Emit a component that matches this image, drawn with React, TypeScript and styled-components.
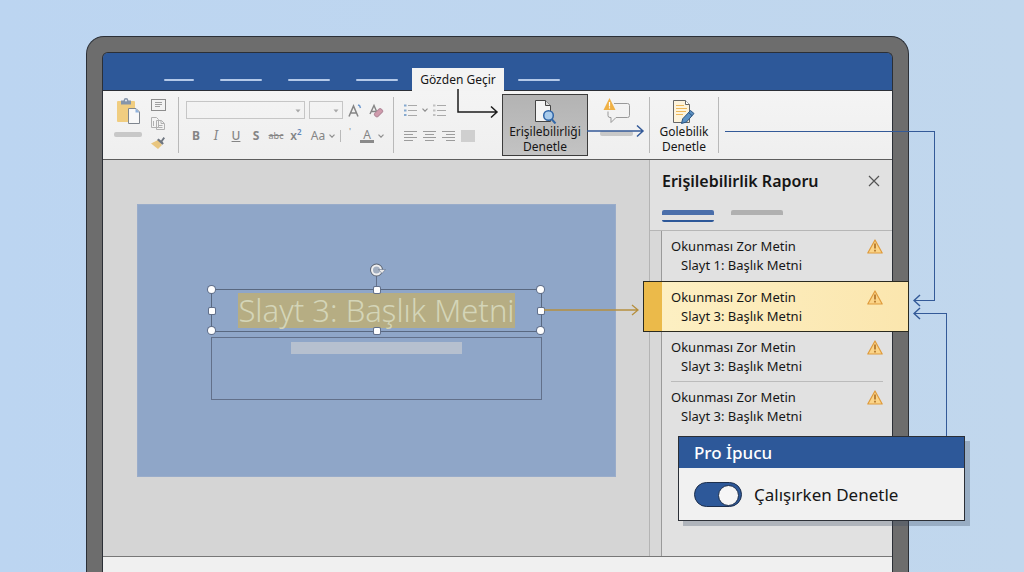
import React from "react";
import styled, { createGlobalStyle, css } from "styled-components";

const ink = "#2b2f36";
const blue = "#2d5899";
const line = "#345a98";
const muted = "#858585";

const GlobalStyle = createGlobalStyle`
  * { box-sizing: border-box; }
  body {
    margin: 0;
    background: #bfd7ef;
    font-family: "Noto Sans", "Open Sans", sans-serif;
    color: #161616;
  }
  button {
    font: inherit;
    color: inherit;
    background: none;
    border: 0;
    padding: 0;
  }
  svg { display: block; }
`;

const Stage = styled.main`
  display: flex;
  min-height: 100vh;
  padding: 36px 115px 0 86px;
  background: linear-gradient(90deg, #bcd5f1, #c1d7ed);
  overflow: hidden;
`;

const Laptop = styled.div`
  position: relative;
  flex: 1;
  display: flex;
  min-width: 0;
  padding: 15px 15px 0;
  background: #6d6d6d;
  border: 1px solid ${ink};
  border-bottom: 0;
  border-radius: 18px 18px 0 0;
`;

const Screen = styled.div`
  flex: 1;
  min-width: 0;
  display: flex;
  flex-direction: column;
  border: 1px solid ${ink};
  border-bottom: 0;
  border-radius: 6px 6px 0 0;
`;

const TabBar = styled.nav`
  display: flex;
  height: 38px;
  padding-left: 61px;
  gap: 26px;
  background: ${blue};
  border-bottom: 1px solid ${ink};
  border-radius: 5px 5px 0 0;
`;

const TabStub = styled.span<{ $w: number }>`
  flex: none;
  width: ${(p) => p.$w}px;
  height: 2px;
  margin-top: 26px;
  border-radius: 1px;
  background: #b4c9e8;
`;

const ActiveTab = styled.button`
  position: relative;
  flex: none;
  width: 92px;
  height: 23px;
  margin: 15px -12px 0;
  background: #f3f3f3;
  font-size: 12px;
  line-height: 22px;
`;

const Ribbon = styled.div`
  display: flex;
  align-items: center;
  height: 69px;
  background: linear-gradient(#f4f4f4, #efefef);
  border-bottom: 1px solid #5d5d5d;
`;

const Divider = styled.span<{ $h?: number }>`
  flex: none;
  width: 1px;
  height: ${(p) => p.$h ?? 56}px;
  background: #b9b9b9;
`;

const Group = styled.div<{ $w: number; $pad: number }>`
  flex: none;
  display: flex;
  width: ${(p) => p.$w}px;
  height: 56px;
  padding-left: ${(p) => p.$pad}px;
`;

const Stack = styled.div<{ $gap: number; $align?: string }>`
  display: flex;
  flex-direction: column;
  align-items: ${(p) => p.$align ?? "center"};
  gap: ${(p) => p.$gap}px;
`;

const Line = styled.div<{ $gap?: number; $h: number }>`
  display: flex;
  align-items: center;
  gap: ${(p) => p.$gap ?? 0}px;
  height: ${(p) => p.$h}px;
`;

const LabelStub = styled.span<{ $w: number }>`
  width: ${(p) => p.$w}px;
  height: 5px;
  border-radius: 2px;
  background: #c8c8c8;
`;

const PasteColumn = styled(Stack)`
  margin-right: 8px;
`;

const SmallTools = styled(Stack)`
  padding-top: 2px;
`;

const PickerBox = styled.div<{ $w: number }>`
  position: relative;
  width: ${(p) => p.$w}px;
  height: 18px;
  & > svg {
    position: absolute;
    right: 4px;
    top: 8px;
    pointer-events: none;
  }
`;

const Picker = styled.select`
  display: block;
  width: 100%;
  height: 100%;
  appearance: none;
  background: transparent;
  border: 1px solid #c6c6c6;
  border-radius: 0;
`;

const Format = styled.button<{ $w?: number; $kind?: string }>`
  display: flex;
  align-items: center;
  justify-content: center;
  gap: 4px;
  flex: none;
  width: ${(p) => p.$w ?? 20}px;
  height: 20px;
  color: ${muted};
  font-size: 12px;
  line-height: 16px;
  ${(p) => p.$kind === "bold" && css`font-weight: 700;`}
  ${(p) => p.$kind === "semibold" && css`font-weight: 600;`}
  ${(p) => p.$kind === "italic" && css`font-family: "DejaVu Serif", serif; font-style: italic;`}
  ${(p) => p.$kind === "underline" && css`font-weight: 500; text-decoration: underline;`}
  ${(p) => p.$kind === "strike" && css`font-size: 9px; text-decoration: line-through;`}
  ${(p) => p.$kind === "tick" && css`align-items: flex-start; font-size: 9px; line-height: 12px;`}
`;

const PowerMark = styled.span`
  align-self: flex-start;
  margin-left: -4px;
  color: #5f86b8;
  font-size: 8px;
  line-height: 12px;
`;

const FontMark = styled.span`
  width: 14px;
  font-size: 12px;
  line-height: 11px;
  text-align: center;
  border-bottom: 3px solid #8a8a8a;
`;

const Command = styled.button<{ $w: number; $active?: boolean }>`
  position: relative;
  flex: none;
  display: flex;
  flex-direction: column;
  align-items: center;
  width: ${(p) => p.$w}px;
  height: 62px;
  padding-top: 3px;
  font-size: 12px;
  line-height: 15px;
  white-space: nowrap;
  border: 1px solid transparent;
  ${(p) =>
    p.$active &&
    css`
      background: linear-gradient(#b3b3b3, #c3c3c3);
      border-color: #3c3c3c;
    `}
`;

const CommandLine = styled.span`
  display: block;
  height: 15px;
`;

const CommentCommand = styled(Command)`
  padding-right: 4px;
`;

const Content = styled.div`
  flex: 1;
  display: flex;
  min-height: 396px;
`;

const Canvas = styled.section`
  flex: 1;
  min-width: 0;
  display: flex;
  padding: 44px 33px 79px 34px;
  background: #d5d5d5;
`;

const Slide = styled.div`
  flex: 1;
  min-width: 0;
  padding: 84px 73px 0;
  background: #8fa6c8;
  border: 1px solid #99acca;
`;

const TitleFrame = styled.div`
  position: relative;
  display: flex;
  justify-content: center;
  align-items: center;
  height: 43px;
  border: 1px solid #596880;
`;

const TitleText = styled.h1`
  margin: 0;
  background: #b6ad83;
  color: #d4d5b8;
  font-size: 31px;
  font-weight: 300;
  line-height: 35px;
  white-space: nowrap;
`;

const Handle = styled.span<{ $x: string; $y: string; $round?: boolean }>`
  position: absolute;
  left: ${(p) => p.$x};
  top: ${(p) => p.$y};
  width: ${(p) => (p.$round ? 7 : 6)}px;
  height: ${(p) => (p.$round ? 7 : 6)}px;
  margin: ${(p) => (p.$round ? -4 : -3)}px;
  border-radius: ${(p) => (p.$round ? "50%" : "1px")};
  background: #fff;
  box-shadow: 0 0 0 1px #62708a;
`;

const RotateHandle = styled.div`
  position: absolute;
  left: 50%;
  top: -28px;
  margin-left: -8px;
`;

const BodyFrame = styled.div`
  display: flex;
  justify-content: center;
  height: 63px;
  margin-top: 5px;
  padding-top: 4px;
  border: 1px solid #62708a;
`;

const BodyStub = styled.span`
  width: 52%;
  height: 12px;
  background: #b6c0cf;
`;

const Pane = styled.aside`
  flex: none;
  display: flex;
  flex-direction: column;
  width: 243px;
  background: #e1e1e1;
  border-left: 1px solid #b4b4b4;
`;

const PaneHead = styled.header`
  display: flex;
  align-items: center;
  justify-content: space-between;
  height: 41px;
  padding: 0 12px;
`;

const PaneTitle = styled.h2`
  margin: 0;
  font-size: 16px;
  font-weight: 600;
  line-height: 22px;
  white-space: nowrap;
`;

const PaneTabs = styled.div`
  display: flex;
  gap: 17px;
  height: 30px;
  padding: 9px 12px 0;
  border-bottom: 1px solid #b6b6b6;
`;

const PaneTab = styled.button<{ $on?: boolean }>`
  width: 52px;
  height: 12px;
  border-top: 5px solid ${(p) => (p.$on ? "#4a6eaa" : "#b0b0b0")};
  border-bottom: 2px solid ${(p) => (p.$on ? blue : "transparent")};
  border-radius: 2px;
`;

const IssueArea = styled.div`
  flex: 1;
  display: flex;
  padding-left: 11px;
  background: #d8d8d8;
`;

const Issues = styled.ul`
  flex: 1;
  min-width: 0;
  margin: 0;
  padding: 0;
  list-style: none;
  background: #e1e1e1;
  border-left: 1px solid #9a9a9a;
`;

const Issue = styled.li<{ $selected?: boolean; $ruled?: boolean }>`
  position: relative;
  display: flex;
  justify-content: space-between;
  height: ${(p) => (p.$selected ? 51 : 50)}px;
  margin: 0 9px;
  padding-top: 6px;
  font-size: 13px;
  line-height: 19px;
  white-space: nowrap;
  ${(p) => p.$ruled && css`border-bottom: 1px solid #bbb;`}
  ${(p) =>
    p.$selected &&
    css`
      margin: 0 -17px 0 -19px;
      padding: 6px 25px 0 27px;
      background: linear-gradient(90deg, #fdf0c4, #fbe6ae);
      border: 1px solid #2a2a20;
      &::before {
        content: "";
        position: absolute;
        inset: 0 auto 0 0;
        width: 18px;
        background: #ebba4a;
      }
    `}
`;

const IssuePlace = styled.div`
  padding-left: 10px;
`;

const WarnMark = styled.span`
  padding-top: 2px;
`;

const StatusBar = styled.footer`
  height: 17px;
  background: #f0f0f0;
  border-top: 1px solid #777;
`;

const Tip = styled.section`
  position: absolute;
  right: -57px;
  top: 399px;
  width: 287px;
  background: #f1f1f1;
  border: 1px solid ${ink};
  box-shadow: 5px 5px 0 rgba(60, 75, 100, 0.3);
`;

const TipTitle = styled.h2`
  margin: 0;
  padding: 0 15px;
  background: ${blue};
  color: #fff;
  font-size: 17px;
  font-weight: 500;
  line-height: 31px;
`;

const TipBody = styled.label`
  display: flex;
  align-items: center;
  gap: 12px;
  height: 52px;
  padding: 0 15px;
  font-size: 17px;
  white-space: nowrap;
`;

const Switch = styled.input`
  appearance: none;
  position: relative;
  flex: none;
  width: 48px;
  height: 25px;
  margin: 0;
  background: ${blue};
  border: 1px solid #1d2f4d;
  border-radius: 13px;
  &::after {
    content: "";
    position: absolute;
    right: 2px;
    top: 2px;
    width: 19px;
    height: 19px;
    border-radius: 50%;
    background: #f6f6f6;
    border: 1px solid #1d2f4d;
  }
`;

/* Elbow connector: two borders of an empty box that stretches with the page */
const Elbow = styled.span<{ $top: number; $height: number; $left: string; $right: number; $sides: string }>`
  position: absolute;
  top: ${(p) => p.$top}px;
  height: ${(p) => p.$height}px;
  left: ${(p) => p.$left};
  right: ${(p) => p.$right}px;
  border: 0 solid ${line};
  border-width: ${(p) => p.$sides};
  pointer-events: none;
`;

const Floating = styled.span<{ $left?: string; $right?: number; $top: number }>`
  position: absolute;
  top: ${(p) => p.$top}px;
  left: ${(p) => p.$left ?? "auto"};
  right: ${(p) => (p.$right === undefined ? "auto" : `${p.$right}px`)};
  z-index: 2;
  pointer-events: none;
`;

const Chevron = () => (
  <svg width="6" height="4" viewBox="0 0 6 4" fill="none" stroke="#8f8f8f" strokeWidth="1.2">
    <path d="M.5 .7 3 3.2 5.5 .7" />
  </svg>
);

const Caret = () => (
  <svg width="6" height="4" viewBox="0 0 6 4">
    <path d="M.5 .5h5L3 3.5z" fill="#a8a8a8" />
  </svg>
);

const Paste = () => (
  <svg width="26" height="27" viewBox="0 0 26 27">
    <rect x="2" y="4" width="18" height="21" rx="1" fill="#f0cd80" />
    <path d="M6 3.500h2.600a2.400 2.400 0 0 1 4.800 0H16v4H6z" fill="#8595aa" />
    <circle cx="11" cy="3.600" r="1" fill="#e8edf3" />
    <path d="M13.500 11.500h7.500l3.500 3.500v11.500h-11z" fill="#f8f8f8" stroke="#7e858e" />
    <path d="M20.500 11.500v4h4z" fill="#8fb2dd" />
  </svg>
);

const LayoutIcon = () => (
  <svg width="15" height="12" viewBox="0 0 15 12" fill="none" stroke="#8d8d8d">
    <rect x=".5" y=".5" width="14" height="11" />
    <path d="M4 3.500h7M4 5.500h7M4 7.500h5" stroke="#a0a0a0" />
  </svg>
);

const CopyIcon = () => (
  <svg width="14" height="13" viewBox="0 0 14 13" fill="#f3f3f3" stroke="#b0b0b0">
    <path d="M.5 .5h5l2 2v8h-7zM5.500 3.500h5l3 3v6h-8zM10 3.500v3h3M7.500 8.500h4M7.500 10.500h4M2.500 4v5" />
  </svg>
);

const Brush = () => (
  <svg width="16" height="13" viewBox="0 0 16 13">
    <path d="M1 7.500 8 4l4 5-4 4z" fill="#e9c67f" />
    <path d="M7 4l1.500-1.500L11 4.500 13.500 1 15 2.300 12.500 5.500l1.300 2-1.500 1.300z" fill="#6f7680" />
  </svg>
);

const GrowFont = () => (
  <svg width="14" height="15" viewBox="0 0 14 15" fill="none" stroke={muted} strokeWidth="1.500">
    <path d="M1 13.500 5.500 3 10 13.500M2.700 10h5.600" />
    <path d="M10 2l1.500 .5L12.500 5" stroke="#6d98cf" />
  </svg>
);

const ClearFormat = () => (
  <svg width="15" height="15" viewBox="0 0 15 15" fill="none">
    <path d="M1 11 5 2.500l3.500 8M2.500 8.500h5" stroke={muted} strokeWidth="1.400" />
    <rect x="5" y="7.500" width="9" height="4.500" rx="1.500" transform="rotate(-45 9.500 9.700)" fill="#d09bac" stroke="#b2899a" />
  </svg>
);

const Bullets = ({ dots }: { dots: string }) => (
  <svg width="13" height="12" viewBox="0 0 13 12">
    <path d="M0 1.500h2.500M0 6.500h2.500M0 11h2.500" stroke={dots} strokeWidth="2" />
    <path d="M4 1.500h9M4 6.500h9M4 11.500h9" stroke="#a9a9a9" />
  </svg>
);

const AlignIcon = ({ d }: { d: string }) => (
  <svg width="13" height="11" viewBox="0 0 13 11">
    <path d={d} stroke="#9c9c9c" />
  </svg>
);

const Justify = () => (
  <svg width="14" height="12" viewBox="0 0 14 12">
    <rect width="14" height="12" fill="#cfcfcf" />
  </svg>
);

const CheckDoc = () => (
  <svg width="24" height="26" viewBox="0 0 24 26">
    <path d="M2.500 2.500h10l5 5v16h-15z" fill="#f4f4f4" stroke="#444" />
    <path d="M12.500 2.500v5h5" fill="#d9d9d9" stroke="#444" />
    <path d="M18.500 21l4 4.500" stroke="#3469a8" strokeWidth="2" />
    <circle cx="15.500" cy="17.500" r="4.800" fill="#a9cbeb" stroke="#2f65a7" strokeWidth="1.500" />
  </svg>
);

const CommentWarn = () => (
  <svg width="28" height="26" viewBox="0 0 28 26">
    <path d="M11 5.500h13.500a2 2 0 0 1 2 2v10a2 2 0 0 1-2 2H13l-5 5v-5H7a2 2 0 0 1-2-2v-4" fill="none" stroke="#999" />
    <path d="M6.500 0l6 12h-12z" fill="#f0b145" />
    <path d="M6.500 4v4.500M6.500 9.300v1.300" stroke="#fff" strokeWidth="1.200" />
  </svg>
);

const EditDoc = () => (
  <svg width="24" height="26" viewBox="0 0 24 26">
    <path d="M1.500 2.500h12l4 4v18h-16z" fill="#fdf3dc" stroke="#666" />
    <path d="M13.500 2.500v4h4" fill="#fff" stroke="#666" />
    <path d="M4 7.500h8M4 10.500h11M4 13.500h10M4 16.500h7" stroke="#efb95a" strokeWidth="1.200" />
    <path d="M18.500 12.500l3.500 3-7.500 8.500-5 1.500 1.200-4.700z" fill="#5b91c4" stroke="#2c5580" />
    <path d="M16.700 14.600l3.400 3.100" stroke="#2c5580" />
  </svg>
);

const Warning = () => (
  <svg width="16" height="15" viewBox="0 0 16 15">
    <path d="M8 1 15.200 14H.8z" fill="#fbd488" stroke="#df9b3c" strokeWidth="1.200" strokeLinejoin="round" />
    <path d="M8 4.500v5M8 10.800v1.700" stroke="#a5651b" strokeWidth="1.500" />
  </svg>
);

const Close = () => (
  <svg width="12" height="12" viewBox="0 0 12 12" stroke="#555" strokeWidth="1.200">
    <path d="M1 1l10 10M11 1 1 11" />
  </svg>
);

const Rotate = () => (
  <svg width="18" height="28" viewBox="0 0 18 28" fill="none">
    <path d="M7.500 14v13" stroke="#62708a" />
    <circle cx="7.500" cy="8" r="4.500" stroke="#5d6675" strokeWidth="4" />
    <circle cx="7.500" cy="8" r="4.500" fill="#a3afc0" stroke="#f0f0f0" strokeWidth="2" />
    <path d="M9.500 7.500h7l-3.500 4z" fill="#e8e8e8" stroke="#62708a" strokeWidth=".6" />
  </svg>
);

const HeadLeft = () => (
  <svg width="22" height="13" viewBox="0 0 22 13" fill="none" stroke={line}>
    <path d="M7 1 1 6.500l6 5.500" strokeWidth="1.500" />
    <path d="M1 6.500h21" />
  </svg>
);

const TabArrow = () => (
  <svg width="42" height="32" viewBox="0 0 42 32" fill="none" stroke="#1d1d1d" strokeWidth="1.500">
    <path d="M1 1v23h39M34 18.500l6 5.500-6 5.500" />
  </svg>
);

const CommandArrow = () => (
  <svg width="58" height="14" viewBox="0 0 58 14" fill="none" stroke={line} strokeWidth="1.500">
    <path d="M0 7h56M50 1.500 56 7l-6 5.500" />
  </svg>
);

const IssueArrow = () => (
  <svg width="98" height="12" viewBox="0 0 98 12" fill="none" stroke="#b6903f" strokeWidth="1.300">
    <path d="M3 6h94M91 1l6 5-6 5" />
  </svg>
);

const handles: [string, string, boolean][] = [
  ["0%", "0%", true],
  ["50%", "0%", false],
  ["100%", "0%", true],
  ["0%", "50%", false],
  ["100%", "50%", false],
  ["0%", "100%", true],
  ["50%", "100%", false],
  ["100%", "100%", true],
];

const issues = [
  { place: "Slayt 1: Başlık Metni" },
  { place: "Slayt 3: Başlık Metni", selected: true },
  { place: "Slayt 3: Başlık Metni", ruled: true },
  { place: "Slayt 3: Başlık Metni" },
];

export default function App() {
  return (
    <Stage>
      <GlobalStyle />
      <Laptop>
        <Screen>
          <TabBar>
            <TabStub $w={30} />
            <TabStub $w={42} />
            <TabStub $w={42} />
            <TabStub $w={42} />
            <ActiveTab>
              Gözden Geçir
              <Floating $left="45px" $top={20}>
                <TabArrow />
              </Floating>
            </ActiveTab>
            <TabStub $w={42} />
          </TabBar>

          <Ribbon>
            <Group $w={75} $pad={11}>
              <PasteColumn $gap={8}>
                <button aria-label="Yapıştır"><Paste /></button>
                <LabelStub $w={28} />
              </PasteColumn>
              <SmallTools $gap={6}>
                <button aria-label="Düzen"><LayoutIcon /></button>
                <button aria-label="Kopyala"><CopyIcon /></button>
                <button aria-label="Biçim boyacısı"><Brush /></button>
              </SmallTools>
            </Group>
            <Divider />
            <Group $w={214} $pad={7}>
              <Stack $gap={3} $align="flex-start">
                <Line $h={26} $gap={4}>
                  <PickerBox $w={119}>
                    <Picker aria-label="Yazı tipi" />
                    <Caret />
                  </PickerBox>
                  <PickerBox $w={34}>
                    <Picker aria-label="Yazı boyutu" />
                    <Caret />
                  </PickerBox>
                  <Format $w={16} aria-label="Büyüt"><GrowFont /></Format>
                  <Format $w={18} aria-label="Biçimi temizle"><ClearFormat /></Format>
                </Line>
                <Line $h={20}>
                  <Format $kind="bold">B</Format>
                  <Format $kind="italic">I</Format>
                  <Format $kind="underline">U</Format>
                  <Format $kind="bold">S</Format>
                  <Format $kind="strike">abc</Format>
                  <Format $kind="semibold">x<PowerMark>2</PowerMark></Format>
                  <Format $w={34}>Aa<Chevron /></Format>
                  <Divider $h={12} />
                  <Format $w={18} $kind="tick" aria-label="Vurgu">'</Format>
                  <Format $w={26}><FontMark>A</FontMark><Chevron /></Format>
                </Line>
              </Stack>
            </Group>
            <Divider />
            <Group $w={108} $pad={10}>
              <Stack $gap={3} $align="flex-start">
                <Line $h={26} $gap={5}>
                  <button aria-label="Madde işaretleri"><Bullets dots="#86a9cf" /></button>
                  <Chevron />
                  <button aria-label="Numaralandırma"><Bullets dots="#c2c2c2" /></button>
                </Line>
                <Line $h={20} $gap={6}>
                  <button aria-label="Sola hizala"><AlignIcon d="M0 .5h13M0 3.500h9M0 6.500h13M0 9.500h9" /></button>
                  <button aria-label="Ortala"><AlignIcon d="M0 .5h13M2 3.500h9M0 6.500h13M2 9.500h9" /></button>
                  <button aria-label="Sağa hizala"><AlignIcon d="M0 .5h13M4 3.500h9M0 6.500h13M4 9.500h9" /></button>
                  <button aria-label="İki yana yasla"><Justify /></button>
                </Line>
              </Stack>
            </Group>
            <Command $w={86} $active>
              <CheckDoc />
              <CommandLine>Erişilebilirliği</CommandLine>
              <CommandLine>Denetle</CommandLine>
              <Floating $left="100%" $top={29}>
                <CommandArrow />
              </Floating>
            </Command>
            <CommentCommand $w={61} aria-label="Açıklama uyarısı">
              <CommentWarn />
              <Line $h={18}><LabelStub $w={33} /></Line>
            </CommentCommand>
            <Divider />
            <Command $w={68}>
              <EditDoc />
              <CommandLine>Golebilik</CommandLine>
              <CommandLine>Denetle</CommandLine>
            </Command>
            <Divider />
          </Ribbon>

          <Content>
            <Canvas>
              <Slide>
                <TitleFrame>
                  <TitleText>Slayt 3: Başlık Metni</TitleText>
                  <RotateHandle><Rotate /></RotateHandle>
                  {handles.map(([x, y, round]) => (
                    <Handle key={x + y} $x={x} $y={y} $round={round} />
                  ))}
                  <Floating $left="100%" $top={14}>
                    <IssueArrow />
                  </Floating>
                </TitleFrame>
                <BodyFrame>
                  <BodyStub />
                </BodyFrame>
              </Slide>
            </Canvas>
            <Pane>
              <PaneHead>
                <PaneTitle>Erişilebilirlik Raporu</PaneTitle>
                <button aria-label="Kapat"><Close /></button>
              </PaneHead>
              <PaneTabs>
                <PaneTab $on aria-label="Sorunlar" />
                <PaneTab aria-label="Ayrıntılar" />
              </PaneTabs>
              <IssueArea>
                <Issues>
                  {issues.map((issue, i) => (
                    <Issue key={i} $selected={issue.selected} $ruled={issue.ruled}>
                      <div>
                        Okunması Zor Metin
                        <IssuePlace>{issue.place}</IssuePlace>
                      </div>
                      <WarnMark><Warning /></WarnMark>
                    </Issue>
                  ))}
                </Issues>
              </IssueArea>
            </Pane>
          </Content>
          <StatusBar />
        </Screen>

        <Elbow $top={94} $height={170} $left="638px" $right={-27} $sides="1px 1px 0 0" />
        <Floating $right={-27} $top={257}><HeadLeft /></Floating>
        <Elbow $top={276} $height={124} $left="calc(100% + 20px)" $right={-39} $sides="1px 1px 0 0" />
        <Floating $right={-27} $top={270}><HeadLeft /></Floating>

        <Tip>
          <TipTitle>Pro İpucu</TipTitle>
          <TipBody>
            <Switch type="checkbox" role="switch" defaultChecked />
            Çalışırken Denetle
          </TipBody>
        </Tip>
      </Laptop>
    </Stage>
  );
}
